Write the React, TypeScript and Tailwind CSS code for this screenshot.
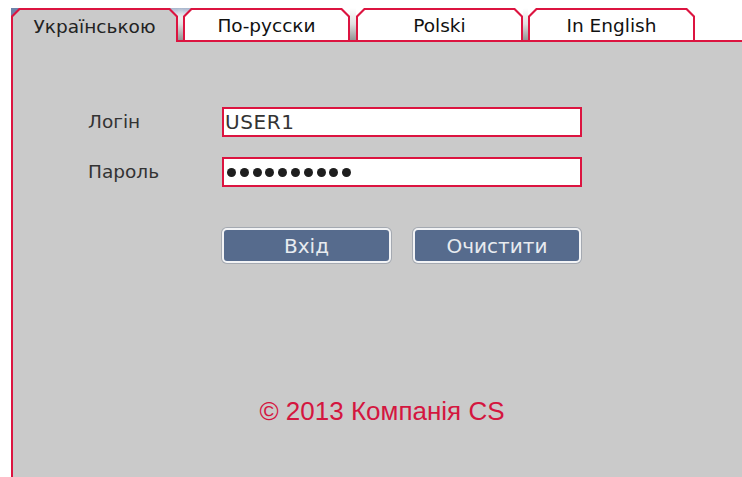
const RED = "border-[#dc1440]";

type TabProps = { label: string; active?: boolean };

function Tab({ label, active }: TabProps) {
  return (
    <div
      className={`relative w-[167px] h-full bg-[#dc1440] pt-[2px] px-[2px] ${
        active ? "pb-0" : "pb-[2px]"
      } [clip-path:polygon(8px_0,calc(100%_-_8px)_0,100%_8px,100%_100%,0_100%,0_8px)]`}
    >
      <div
        className={`h-full flex items-center justify-center text-[18.5px] pt-[2px] ${
          active ? "bg-[#cacaca] text-[#222]" : "bg-white text-[#111]"
        } [clip-path:polygon(7px_0,calc(100%_-_7px)_0,100%_7px,100%_100%,0_100%,0_7px)]`}
      >
        {label}
      </div>
    </div>
  );
}

function Gap({ w }: { w: "w-[5px]" | "w-[6px]" }) {
  return (
    <div
      className={`relative ${w} h-full border-b-2 ${RED} bg-gradient-to-b from-transparent via-[#e0e0e0] to-[#959595]`}
    />
  );
}

function Dots({ count }: { count: number }) {
  return (
    <div className="flex gap-[3.8px] pl-[3px]">
      {Array.from({ length: count }).map((_, i) => (
        <span key={i} className="block w-[9px] h-[9px] rounded-full bg-[#1e1e1e]" />
      ))}
    </div>
  );
}

export default function App() {
  return (
    <div className="w-[742px] h-[477px] bg-white flex flex-col pt-[8px] pl-[11px] overflow-hidden font-['DejaVu_Sans',sans-serif]">
      {/* language tabs */}
      <div className="flex h-[34px] shrink-0">
        <div className="relative flex h-full bg-white">
          <div className="absolute left-0 top-0 w-[9px] h-[9px] bg-[#6d84ab]" />
          <div className="absolute left-[158px] top-0 w-[22px] h-[10px] bg-gradient-to-b from-[#a7b5cc] to-white" />
          <Tab label="Українською" active />
          <Gap w="w-[5px]" />
          <Tab label="По-русски" />
          <Gap w="w-[6px]" />
          <Tab label="Polski" />
          <Gap w="w-[5px]" />
          <Tab label="In English" />
        </div>
        <div className={`flex-1 border-b-2 ${RED}`} />
      </div>

      {/* login panel */}
      <div className={`flex-1 bg-[#cacaca] border-l-2 ${RED} pl-[75px] pt-[65px] flex flex-col`}>
        <div className="flex items-center h-[30px]">
          <span className="w-[134px] text-[18.5px] text-[#333]">Логін</span>
          <div className={`w-[360px] h-[30px] border-2 ${RED} bg-white flex items-center pl-[1px] text-[20px] tracking-[0.6px] text-[#333]`}>
            USER1
          </div>
        </div>
        <div className="flex items-center h-[30px] mt-[20px]">
          <span className="w-[134px] text-[18.5px] text-[#333]">Пароль</span>
          <div className={`w-[360px] h-[30px] border-2 ${RED} bg-white flex items-center`}>
            <Dots count={10} />
          </div>
        </div>
        <div className="flex ml-[134px] mt-[41px] gap-[22px]">
          <button className="w-[169px] h-[35px] rounded-[5px] border-2 border-[#f2f3f5] bg-[#566b8d] shadow-[0_0_0_1px_#a4a9b1] text-[20px] text-[#e8ebf0]">
            Вхід
          </button>
          <button className="w-[168px] h-[35px] rounded-[5px] border-2 border-[#f2f3f5] bg-[#566b8d] shadow-[0_0_0_1px_#a4a9b1] text-[20px] text-[#e8ebf0]">
            Очистити
          </button>
        </div>
        <div className="-ml-[75px] mt-[133px] pl-[9px] text-center text-[26px] leading-[30px] text-[#d4163f] font-['Liberation_Sans',sans-serif]">
          © 2013 Компанія CS
        </div>
      </div>
    </div>
  );
}
